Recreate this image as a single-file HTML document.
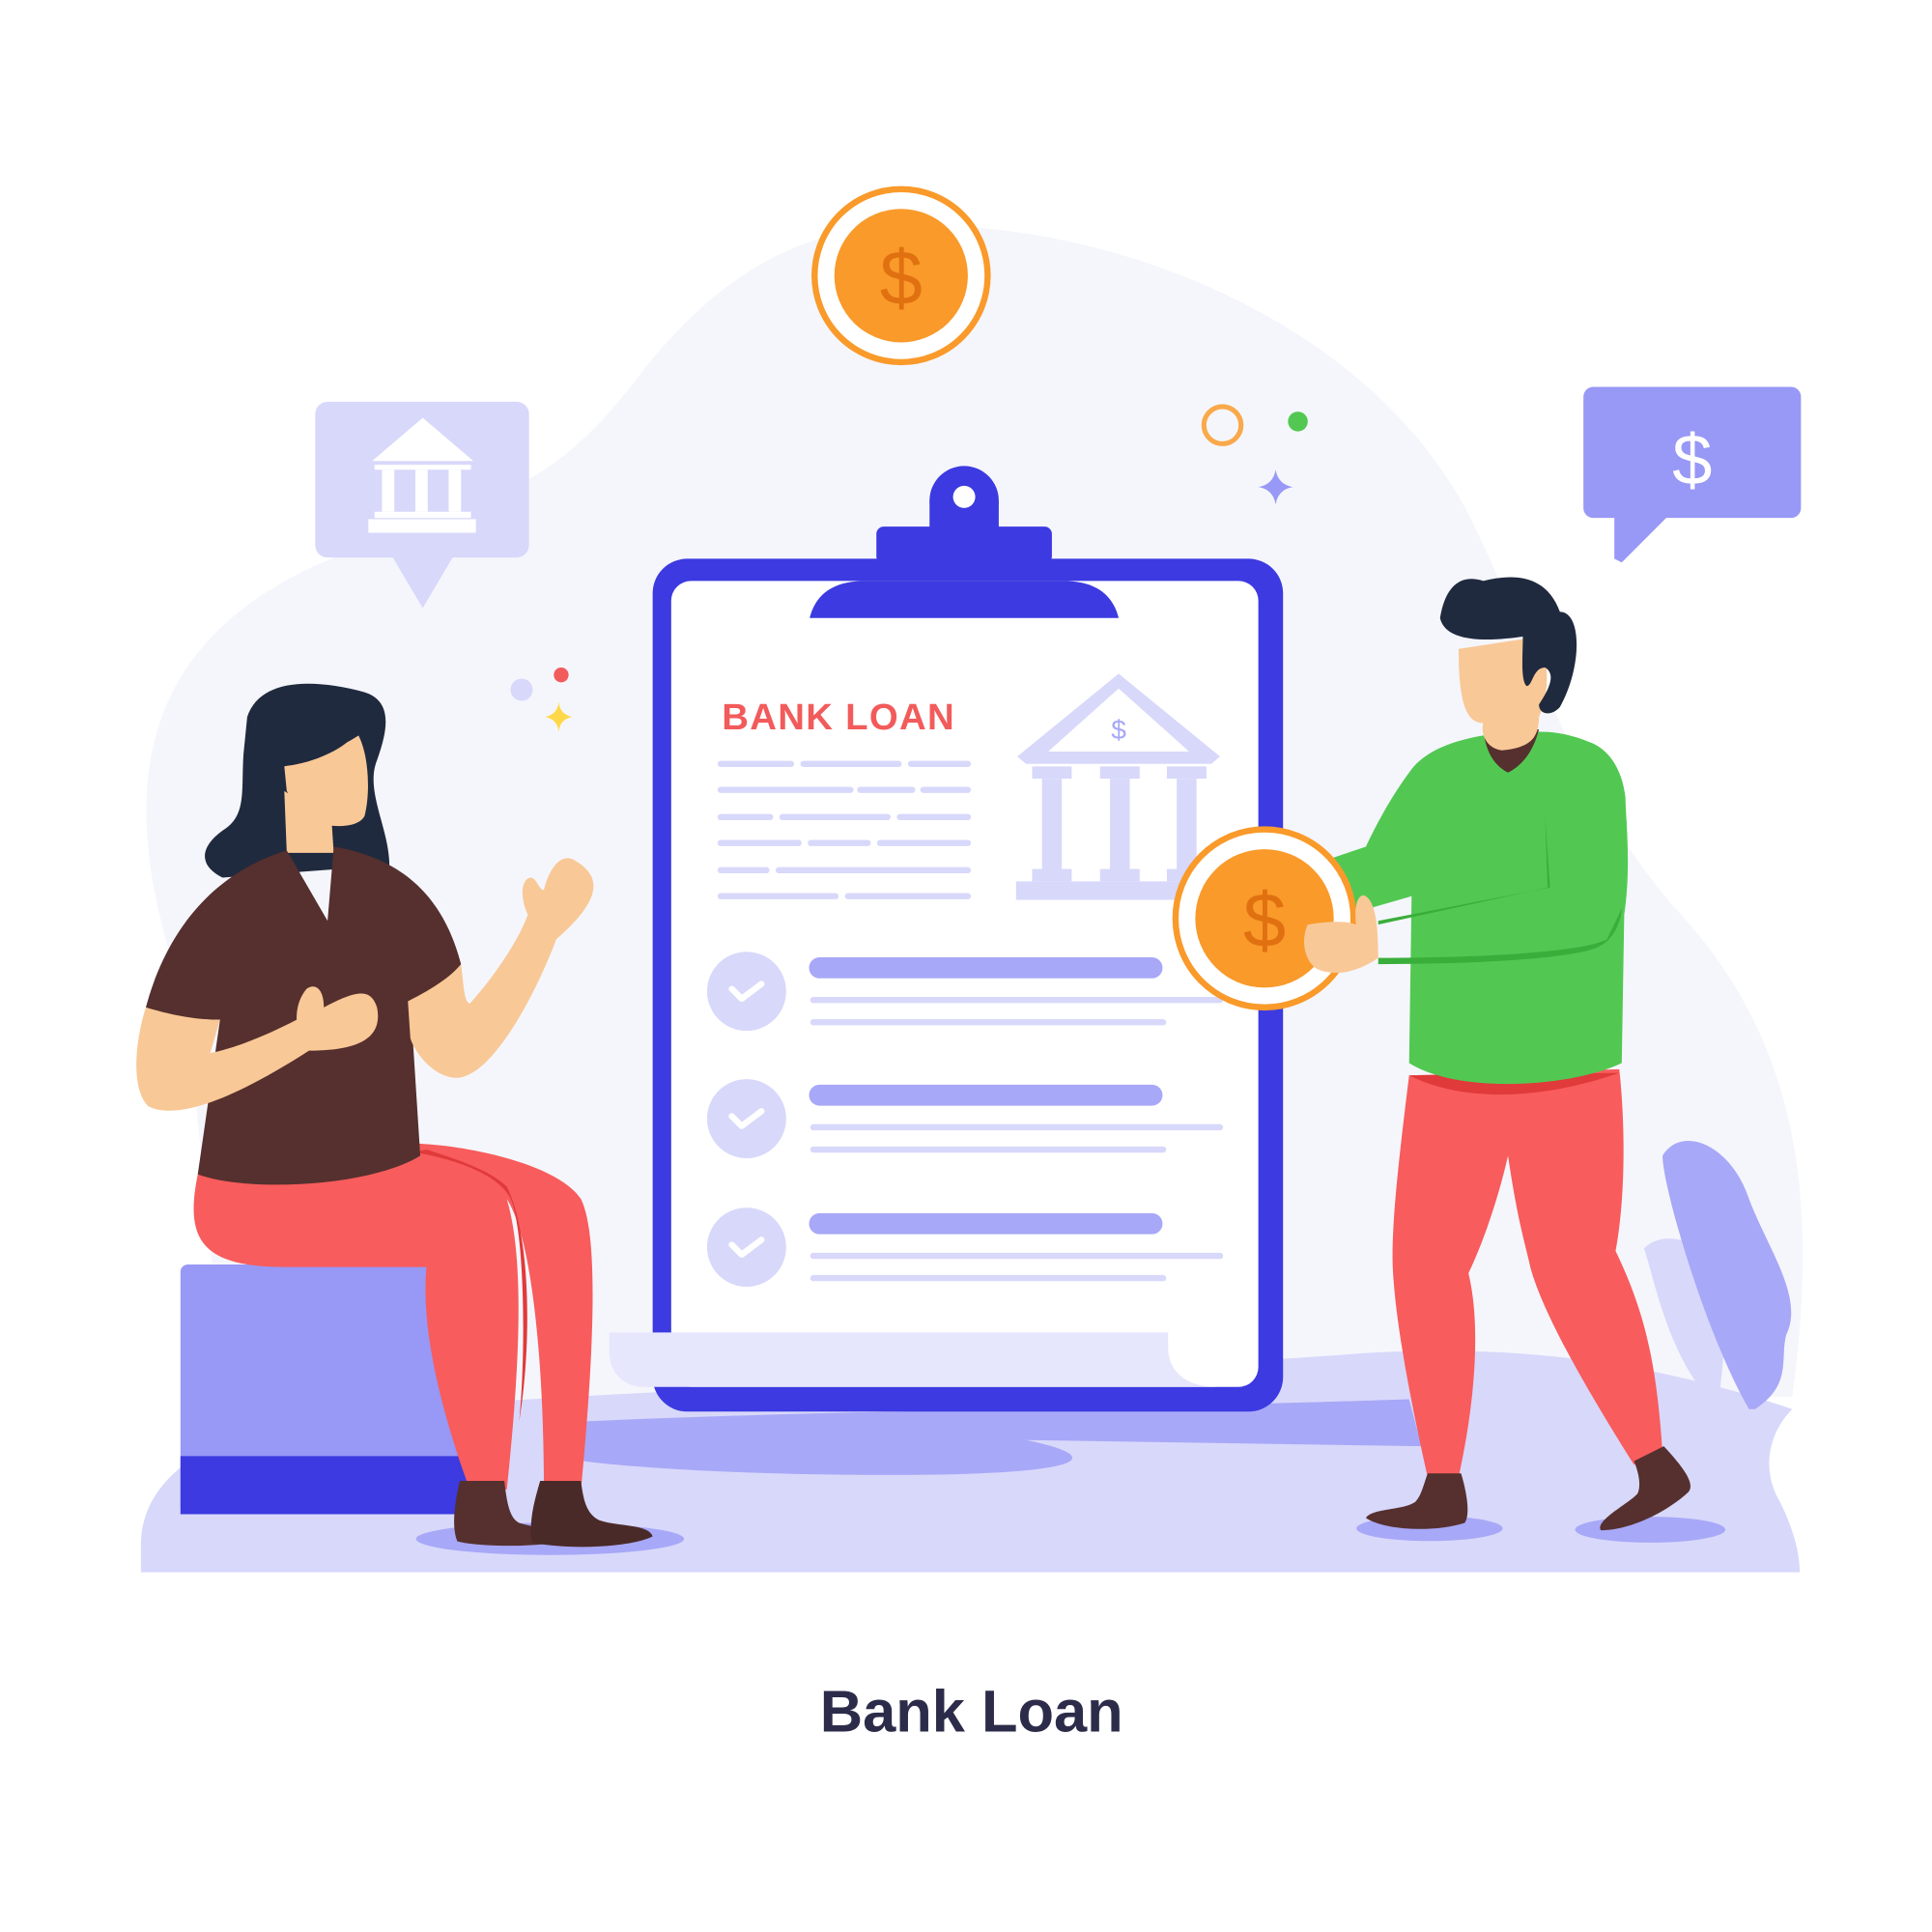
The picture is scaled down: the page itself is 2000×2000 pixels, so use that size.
<!DOCTYPE html>
<html><head><meta charset="utf-8"><style>
html,body{margin:0;padding:0;background:#fff;width:2000px;height:2000px;overflow:hidden}
svg{display:block}
</style></head><body>
<svg width="2000" height="2000" viewBox="0 0 1563 1563" xmlns="http://www.w3.org/2000/svg">
<rect width="1563" height="1563" fill="#fff"/>
<path d="M140 780 C90 620 120 500 300 440 C420 400 460 380 520 300 C600 200 680 170 800 185 C950 200 1120 280 1190 420 C1240 520 1270 640 1360 740 C1460 850 1470 980 1450 1130 L200 1150 C160 1050 170 900 140 780 Z" fill="#f5f6fc"/>
<path d="M114 1272 L114 1250 C114 1190 180 1150 300 1140 C600 1120 900 1110 1100 1095 C1250 1085 1360 1110 1450 1140 C1430 1160 1425 1190 1440 1215 C1450 1235 1456 1255 1456 1272 Z" fill="#d8d8fb"/>
<path d="M470 1150 C700 1140 900 1140 1140 1132 L1150 1170 L830 1165 C880 1175 900 1190 760 1193 C600 1195 480 1185 460 1180 Z" fill="#a8a8f8"/>
<rect x="146" y="1023" width="240" height="202" rx="6" fill="#9898f6"/>
<rect x="146" y="1178" width="240" height="47" fill="#3c3ae0"/>
<rect x="528" y="452" width="510" height="690" rx="28" fill="#3c3ae0"/>
<rect x="543" y="470" width="475" height="652" rx="16" fill="#fff"/>
<path d="M493 1078 L945 1078 L945 1090 C945 1110 960 1122 985 1122 L520 1122 C505 1122 493 1110 493 1095 Z" fill="#e6e6fd"/>
<path d="M655 500 C660 480 675 470 700 470 L860 470 C885 470 900 480 905 500 Z" fill="#3c3ae0"/>
<rect x="709" y="426" width="142" height="30" rx="6" fill="#3c3ae0"/>
<circle cx="780" cy="405" r="28" fill="#3c3ae0"/>
<rect x="752" y="405" width="56" height="25" fill="#3c3ae0"/>
<circle cx="780" cy="402" r="9" fill="#fff"/>
<text x="584" y="590" font-family="Liberation Sans, sans-serif" font-size="30" font-weight="bold" fill="#f25b5b" letter-spacing="1">BANK LOAN</text>
<g stroke="#d8d8fb" stroke-width="5" stroke-linecap="round">
<line x1="583" y1="618" x2="640" y2="618"/><line x1="650" y1="618" x2="727" y2="618"/><line x1="737" y1="618" x2="783" y2="618"/>
<line x1="583" y1="639" x2="688" y2="639"/><line x1="696" y1="639" x2="738" y2="639"/><line x1="747" y1="639" x2="783" y2="639"/>
<line x1="583" y1="661" x2="623" y2="661"/><line x1="633" y1="661" x2="718" y2="661"/><line x1="728" y1="661" x2="783" y2="661"/>
<line x1="583" y1="682" x2="646" y2="682"/><line x1="656" y1="682" x2="702" y2="682"/><line x1="712" y1="682" x2="783" y2="682"/>
<line x1="583" y1="704" x2="620" y2="704"/><line x1="630" y1="704" x2="783" y2="704"/>
<line x1="583" y1="725" x2="676" y2="725"/><line x1="686" y1="725" x2="783" y2="725"/>
</g>
<g fill="#d8d8fb">
<path d="M905 545 L987 612 L980 618 L830 618 L823 612 Z"/>
<path d="M905 557 L962 608 L848 608 Z" fill="#fff"/>
<rect x="835" y="620" width="32" height="10"/><rect x="890" y="620" width="32" height="10"/><rect x="944" y="620" width="32" height="10"/>
<rect x="843" y="630" width="16" height="74"/><rect x="898" y="630" width="16" height="74"/><rect x="952" y="630" width="16" height="74"/>
<rect x="835" y="703" width="32" height="10"/><rect x="890" y="703" width="32" height="10"/><rect x="944" y="703" width="32" height="10"/>
<rect x="822" y="713" width="166" height="15"/>
</g>
<text x="905" y="598" font-family="Liberation Sans, sans-serif" font-size="22" fill="#a8a8f8" text-anchor="middle">$</text>
<g>
<circle cx="604" cy="802" r="32" fill="#d8d8fb"/><circle cx="604" cy="905" r="32" fill="#d8d8fb"/><circle cx="604" cy="1009" r="32" fill="#d8d8fb"/>
<g fill="none" stroke="#fff" stroke-width="5" stroke-linecap="round" stroke-linejoin="round">
<path d="M592 800 L600 808 L616 796"/><path d="M592 903 L600 911 L616 899"/><path d="M592 1007 L600 1015 L616 1003"/>
</g>
<g stroke-linecap="round">
<line x1="663" y1="783" x2="932" y2="783" stroke="#a8a8f8" stroke-width="17"/>
<line x1="663" y1="886" x2="932" y2="886" stroke="#a8a8f8" stroke-width="17"/>
<line x1="663" y1="990" x2="932" y2="990" stroke="#a8a8f8" stroke-width="17"/>
<g stroke="#d8d8fb" stroke-width="5">
<line x1="658" y1="809" x2="987" y2="809"/><line x1="658" y1="827" x2="941" y2="827"/>
<line x1="658" y1="912" x2="987" y2="912"/><line x1="658" y1="930" x2="941" y2="930"/>
<line x1="658" y1="1016" x2="987" y2="1016"/><line x1="658" y1="1034" x2="941" y2="1034"/>
</g></g>
</g>
<circle cx="729" cy="223" r="70" fill="#fff" stroke="#f99a2a" stroke-width="5"/>
<circle cx="729" cy="223" r="54" fill="#f99a2a"/>
<text x="729" y="246" font-family="Liberation Sans, sans-serif" font-size="62" fill="#e07010" text-anchor="middle">$</text>
<circle cx="989" cy="344" r="15" fill="none" stroke="#f9a94a" stroke-width="4"/>
<circle cx="1050" cy="341" r="8" fill="#52c852"/>
<path d="M1032 380 Q1034 392 1046 394 Q1034 396 1032 408 Q1030 396 1018 394 Q1030 392 1032 380Z" fill="#9898f6"/>
<circle cx="422" cy="558" r="9" fill="#d8d8fb"/><circle cx="454" cy="546" r="6" fill="#f25b5b"/>
<path d="M452 568 Q453 578 463 580 Q453 582 452 592 Q451 582 441 580 Q451 578 452 568Z" fill="#ffd84a"/>
<rect x="255" y="325" width="173" height="126" rx="10" fill="#d8d8fb"/>
<path d="M316 448 L342 492 L368 448 Z" fill="#d8d8fb"/>
<g fill="#fff"><path d="M342 338 L383 373 L301 373 Z"/>
<rect x="303" y="376" width="78" height="4"/><rect x="309" y="380" width="10" height="34"/><rect x="336" y="380" width="10" height="34"/><rect x="363" y="380" width="10" height="34"/>
<rect x="303" y="414" width="78" height="5"/><rect x="298" y="420" width="87" height="11"/></g>
<rect x="1281" y="313" width="176" height="106" rx="8" fill="#9898f6"/>
<path d="M1306 415 L1306 452 L1312 455 L1352 415 Z" fill="#9898f6"/>
<text x="1369" y="392" font-family="Liberation Sans, sans-serif" font-size="58" fill="#fff" text-anchor="middle">$</text>
<path d="M1390 1140 C1350 1100 1340 1040 1330 1010 C1350 990 1390 1010 1400 1040 Z" fill="#d8d8fb"/>
<path d="M1415 1140 C1380 1080 1345 960 1345 935 C1360 910 1400 925 1415 970 C1430 1010 1460 1050 1445 1080 C1440 1100 1450 1120 1420 1140 Z" fill="#a8a8f8"/>
<path d="M345 1240 A100 12 0 1 0 545 1250 A100 12 0 1 0 345 1240Z" fill="#a8a8f8"/>
<path d="M160 950 C150 1000 160 1025 230 1025 L345 1025 C340 1080 360 1150 380 1205 L410 1205 C420 1110 425 1020 410 970 C430 1000 440 1100 440 1205 L470 1205 C480 1100 485 1000 470 970 C450 940 370 925 330 925 Z" fill="#f85c5c"/>
<path d="M335 932 C380 940 410 955 415 975 C425 1010 425 1100 420 1150 C430 1090 430 1000 410 960 C395 945 360 935 345 930Z" fill="#e03a3a"/>
<path d="M372 1198 L408 1198 C410 1215 412 1228 420 1232 C440 1238 460 1238 465 1245 C440 1252 390 1252 370 1247 C365 1235 368 1215 372 1198Z" fill="#55302e"/>
<path d="M437 1198 L470 1198 C472 1215 475 1225 485 1230 C500 1235 525 1233 528 1243 C510 1252 460 1254 430 1248 C428 1230 432 1215 437 1198Z" fill="#4a2a28"/>
<path d="M200 580 C210 550 250 548 295 560 C320 568 312 595 305 615 C295 640 315 670 315 700 L180 710 C160 700 162 685 180 672 C200 660 195 640 197 610 Z" fill="#202a3e"/>
<path d="M230 620 C250 615 275 605 290 595 C298 610 300 640 295 660 C290 670 270 670 250 665 L232 640 Z" fill="#f9c897"/>
<path d="M230 640 L232 690 L270 690 L268 660 Z" fill="#f9c897"/>
<path d="M225 620 C245 620 280 608 290 590 C275 580 240 590 225 620Z" fill="#202a3e"/>
<path d="M232 688 C160 710 130 770 118 815 C140 823 160 825 178 825 L160 950 C200 965 300 960 340 935 L332 810 C350 800 365 790 373 780 C360 730 330 695 270 685 L265 745 Z" fill="#55302e"/>
<path d="M118 815 C110 840 105 880 120 895 C140 905 180 895 250 850 C290 850 310 840 305 815 C300 800 290 800 262 815 C262 800 255 795 248 800 C240 810 240 820 240 825 C215 838 190 848 170 852 L178 825 C155 825 135 820 118 815Z" fill="#f9c897"/>
<path d="M373 780 C375 795 375 810 380 812 C400 790 420 760 427 740 C420 725 422 710 430 710 C435 712 436 720 440 720 C445 700 455 690 465 696 C485 708 490 725 450 760 C435 800 400 870 370 872 C350 872 335 850 332 840 L330 810 C350 800 365 790 373 780Z" fill="#f9c897"/>
<path d="M1098 1235 A58 10 0 1 0 1215 1238 A58 10 0 1 0 1098 1235Z" fill="#a8a8f8"/>
<path d="M1276 1235 A58 10 0 1 0 1394 1240 A58 10 0 1 0 1276 1235Z" fill="#a8a8f8"/>
<path d="M1140 870 C1130 950 1125 1000 1127 1030 C1130 1080 1145 1150 1155 1195 L1180 1195 C1190 1150 1200 1080 1188 1030 C1200 1005 1212 970 1220 935 C1228 990 1235 1010 1238 1025 C1250 1070 1300 1150 1322 1185 L1345 1175 C1340 1100 1330 1060 1307 1012 C1315 970 1315 910 1310 865 Z" fill="#f85c5c"/>
<path d="M1140 870 C1180 890 1240 892 1310 868 Z" fill="#e03a3a"/>
<path d="M1155 1192 L1182 1192 C1186 1205 1190 1225 1185 1232 C1160 1240 1120 1238 1105 1228 C1110 1220 1135 1222 1145 1215 C1150 1210 1152 1200 1155 1192Z" fill="#55302e"/>
<path d="M1322 1182 L1346 1170 C1360 1185 1372 1200 1366 1207 C1350 1222 1320 1238 1295 1238 C1290 1230 1320 1215 1325 1208 C1328 1200 1325 1190 1322 1182Z" fill="#55302e"/>
<path d="M1200 595 C1170 600 1150 610 1140 625 C1125 645 1112 670 1105 685 L1075 695 L1090 740 L1142 725 L1140 860 C1180 885 1270 880 1312 860 L1314 740 C1320 700 1315 660 1315 645 C1312 620 1300 605 1285 600 C1270 594 1258 592 1245 592 Z" fill="#52c852"/>
<path d="M1115 748 L1252 718 L1250 660 L1254 718 L1115 745Z" fill="#3aae3a"/>
<path d="M1115 780 C1200 780 1280 775 1295 765 C1305 760 1312 745 1312 735 L1300 760 C1280 770 1200 775 1115 775 Z" fill="#3aae3a"/>
<path d="M1200 590 L1245 590 C1240 610 1230 620 1220 625 C1210 620 1202 610 1200 590Z" fill="#55302e"/>
<path d="M1180 525 L1245 515 C1255 540 1252 565 1245 580 C1245 595 1240 605 1215 607 C1200 605 1198 590 1200 585 C1185 585 1180 565 1180 525Z" fill="#f9c897"/>
<path d="M1165 500 C1170 470 1185 465 1200 470 C1220 465 1250 462 1262 495 C1280 495 1280 540 1262 572 C1255 580 1245 578 1245 570 C1255 555 1258 545 1250 540 C1240 540 1240 555 1235 555 C1230 550 1232 530 1232 515 C1210 518 1170 522 1165 500Z" fill="#202a3e"/>
<circle cx="1023" cy="743" r="72" fill="#fff" stroke="#f99a2a" stroke-width="5"/>
<circle cx="1023" cy="743" r="56" fill="#f99a2a"/>
<text x="1023" y="766" font-family="Liberation Sans, sans-serif" font-size="62" fill="#e07010" text-anchor="middle">$</text>
<path d="M1058 748 C1075 745 1090 745 1097 748 C1095 730 1100 722 1105 725 C1112 730 1115 745 1115 775 C1100 785 1085 790 1068 785 C1055 780 1052 760 1058 748Z" fill="#f9c897"/>
<text x="786" y="1401" font-family="Liberation Sans, sans-serif" font-weight="bold" font-size="48" fill="#2c2c4a" text-anchor="middle">Bank Loan</text>
</svg>
</body></html>
